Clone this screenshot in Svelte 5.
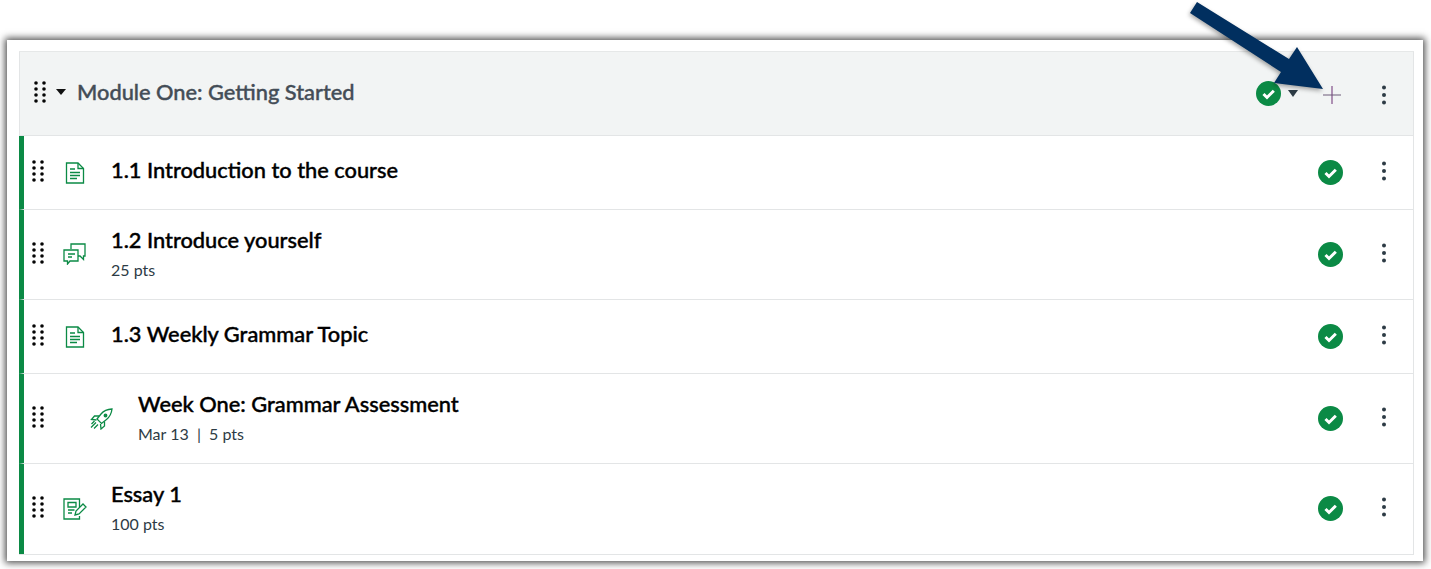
<script>
  const rows = [
    { title: '1.1 Introduction to the course', meta: '', icon: 'page', h: 'h74', indent: false },
    { title: '1.2 Introduce yourself', meta: '25 pts', icon: 'chat', h: 'h90', indent: false },
    { title: '1.3 Weekly Grammar Topic', meta: '', icon: 'page', h: 'h74', indent: false },
    { title: 'Week One: Grammar Assessment', meta: 'Mar 13  |  5 pts', icon: 'quiz', h: 'h90', indent: true },
    { title: 'Essay 1', meta: '100 pts', icon: 'assign', h: 'h90', indent: false }
  ];
</script>

{#snippet grip()}
  <svg class="grip" width="12" height="22" viewBox="0 0 12 22" fill="#050505" aria-hidden="true">
    {#each [2, 8, 14, 20] as y}
      <circle cx="2" cy={y} r="1.800" />
      <circle cx="10" cy={y} r="1.800" />
    {/each}
  </svg>
{/snippet}

{#snippet check(cls)}
  <svg class={cls} width="25" height="25" viewBox="0 0 25 25" aria-hidden="true">
    <circle cx="12.500" cy="12.500" r="12.500" fill="#0b8a45" />
    <path d="M7.500 13l3.500 3.500 6.800-6.800" fill="none" stroke="#fff" stroke-width="3" />
  </svg>
{/snippet}

{#snippet kebab()}
  <svg class="kebab" width="6" height="20" viewBox="0 0 6 20" fill="#2d3b45" aria-hidden="true">
    <circle cx="3" cy="2.500" r="2" /><circle cx="3" cy="10" r="2" /><circle cx="3" cy="17.500" r="2" />
  </svg>
{/snippet}

<main class="page">
  <section class="card">
    <div class="module">
      <header class="head">
        <span class="head-grip">{@render grip()}</span>
        <svg class="caret" width="10" height="6" viewBox="0 0 10 6" aria-hidden="true"><path d="M0 0h10L5 6z" fill="#111" /></svg>
        <h2>Module One: Getting Started</h2>
        <div class="head-actions">
          {@render check('head-check')}
          <svg class="status-caret" width="10" height="7" viewBox="0 0 10 7" aria-hidden="true"><path d="M0 0h10L5 7z" fill="#2d3b45" /></svg>
          <svg class="plus" width="18" height="18" viewBox="0 0 18 18" aria-hidden="true">
            <path d="M9 0v18" stroke="#6a2c73" stroke-width="1" /><path d="M0 9h18" stroke="#6d5a78" stroke-width="1" />
          </svg>
          {@render kebab()}
        </div>
      </header>

      {#each rows as r}
        <div class="row {r.h}">
          <span class="row-grip">{@render grip()}</span>
          <span class="type" class:indent={r.indent}>
            {#if r.icon === 'page'}
              <svg width="20" height="22" viewBox="0 0 20 22" fill="none" stroke="#0b8a45" stroke-width="1.300" aria-hidden="true">
                <path d="M1.500 1h11.500l5.500 5.500V21H1.500z" /><path d="M13 1v5.500h5.500" />
                <path d="M5 7h5M5 10.500h10M5 13.500h10M5 16.500h7" stroke-width="1.400" />
              </svg>
            {:else if r.icon === 'chat'}
              <svg class="chat" width="23" height="22" viewBox="0 0 23 22" fill="none" stroke="#0b8a45" stroke-width="1.300" aria-hidden="true">
                <path d="M8 6V1h14v12h-1.500v3.500L17 13h-2" />
                <path d="M1 7h14v11H7l-2.500 3v-3H1z" fill="#fff" />
                <path d="M5 11h7M5 14h4" stroke-width="1.400" />
              </svg>
            {:else if r.icon === 'quiz'}
              <svg width="23" height="22" viewBox="0 0 23 22" fill="none" stroke="#0b8a45" stroke-width="1.300" aria-hidden="true">
                <path d="M22 1c-5 .2-8.500 2-11 5l-4 5 4.500 4.500 5-4c3-2.500 5-6 5.500-10.500z" />
                <path d="M9 8H4.500L1.500 11.500l5 .5M14.500 13.500V18l-3.500 3-.5-5" />
                <path d="M6 14.500L1 19.500M8 16.500L4 20.500M4.500 13L1.500 16" />
                <circle cx="15.500" cy="7.500" r="1.300" fill="#0b8a45" />
              </svg>
            {:else}
              <svg width="24" height="22" viewBox="0 0 24 22" fill="none" stroke="#0b8a45" stroke-width="1.300" aria-hidden="true">
                <path d="M16.500 9V1H1v20h15.500v-3" />
                <path d="M5 4.500h8v4.500H5zM5 12h6.500M5 15h4" />
                <path d="M12 17l1-4 7-7 3 3-7 7z" />
              </svg>
            {/if}
          </span>
          <div class="body" class:has-meta={!!r.meta}>
            <div class="title">{r.title}</div>
            {#if r.meta}<div class="meta">{r.meta}</div>{/if}
          </div>
          {@render check('row-check')}
          {@render kebab()}
        </div>
      {/each}
    </div>
  </section>

  <svg class="arrow" width="160" height="100" viewBox="0 0 160 100" aria-hidden="true">
    <path d="M0 11L7 0 99 57 107 45 133 87 84 81 91 70z" fill="#012f5f" />
  </svg>
</main>

<style>
  :global(body) {
    margin: 0;
    background: #fff;
  }
  .page {
    position: relative;
    width: 1431px;
    height: 569px;
    padding: 40px 8px 7px 7px;
    box-sizing: border-box;
    overflow: hidden;
    font-family: Lato, "Open Sans", sans-serif;
    color: #000;
  }
  .card {
    height: 521px;
    box-sizing: border-box;
    padding: 11px 9px 7px 12px;
    background: #fff;
    box-shadow: 0 0 7px 2px #505050;
  }
  .module {
    border: 1px solid #e3e5e6;
    border-left: 0;
    border-top-color: #e6e8e8;
  }
  .head {
    display: flex;
    align-items: center;
    height: 83px;
    background: #f2f4f4;
    border-left: 1px solid #e3e5e6;
    border-bottom: 1px solid #e3e5e6;
  }
  .head-grip {
    display: flex;
    margin-left: 14px;
    margin-top: -4px;
  }
  .caret {
    margin-left: 10px;
    margin-top: -3px;
  }
  h2 {
    margin: -4px 0 0 11px;
    font-size: 21.800px;
    font-weight: 500;
    color: #444d57;
    -webkit-text-stroke: 0.4px #444d57;
  }
  .head-actions {
    margin-left: auto;
    display: flex;
    align-items: center;
    padding-right: 26px;
    padding-top: 2px;
  }
  .head-check {
    margin-top: -2px;
  }
  .status-caret {
    margin-left: 7px;
    margin-top: -2px;
  }
  .plus {
    margin-left: 25px;
  }
  .head-actions .kebab {
    margin-left: 40px;
  }
  .row {
    display: flex;
    align-items: center;
    border-left: 5px solid #0b8a45;
    border-bottom: 1px solid #e3e5e6;
    padding-right: 26px;
    box-sizing: border-box;
  }
  .row:last-child {
    border-bottom: 0;
    padding-bottom: 1px;
  }
  .h74 { height: 74px; }
  .h90 { height: 90px; }
  .row-grip {
    display: flex;
    margin-left: 8px;
    margin-top: -3px;
  }
  .type {
    display: flex;
    justify-content: center;
    width: 26px;
    margin-left: 18px;
  }
  .type.indent {
    margin-left: 44px;
  }
  .chat {
    margin-top: -2px;
    margin-left: -2px;
  }
  .body {
    flex: 1;
    margin-left: 23px;
    margin-top: -6px;
  }
  .body.has-meta {
    margin-top: -5px;
  }
  .indent + .body {
    margin-left: 24px;
  }
  .title {
    font-size: 21.800px;
    font-weight: 500;
    line-height: 28px;
    color: #000;
    -webkit-text-stroke: 0.4px #000;
  }
  .meta {
    margin-top: 7px;
    font-size: 16px;
    line-height: 18px;
    color: #2d3b45;
    white-space: pre;
  }
  .row-check {
    margin-right: 38px;
  }
  .row .kebab {
    margin-top: -3px;
  }
  .arrow {
    position: absolute;
    left: 1190px;
    top: 2px;
    filter: drop-shadow(-1px 2px 2px rgba(0,0,0,.35));
  }
</style>
